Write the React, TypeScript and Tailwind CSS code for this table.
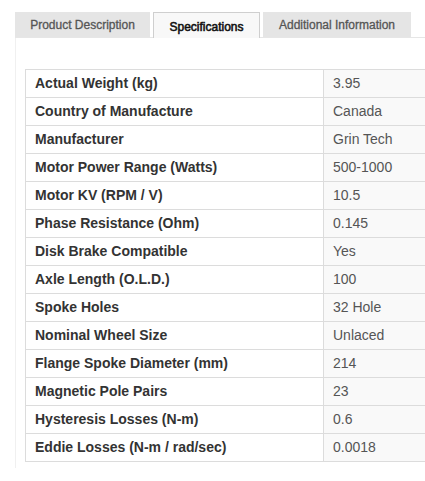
import React from "react";

const rows: [string, string][] = [
  ["Actual Weight (kg)", "3.95"],
  ["Country of Manufacture", "Canada"],
  ["Manufacturer", "Grin Tech"],
  ["Motor Power Range (Watts)", "500-1000"],
  ["Motor KV (RPM / V)", "10.5"],
  ["Phase Resistance (Ohm)", "0.145"],
  ["Disk Brake Compatible", "Yes"],
  ["Axle Length (O.L.D.)", "100"],
  ["Spoke Holes", "32 Hole"],
  ["Nominal Wheel Size", "Unlaced"],
  ["Flange Spoke Diameter (mm)", "214"],
  ["Magnetic Pole Pairs", "23"],
  ["Hysteresis Losses (N-m)", "0.6"],
  ["Eddie Losses (N-m / rad/sec)", "0.0018"],
];

export default function App() {
  return (
    <div className="w-[425px] h-[481px] bg-white overflow-hidden" style={{ fontFamily: '"Liberation Sans", Arial, sans-serif' }}>
      <div className="pt-[13px] pl-[15px]">
        <div className="flex items-end h-[25px] border-b border-[#e6e6e6] gap-[3px]">
          <div className="w-[135px] h-[25px] bg-[#e5e5e5] text-[#555] text-[12px] [-webkit-text-stroke:0.3px_#555] flex items-center justify-center">
            Product Description
          </div>
          <div className="w-[107px] h-[26px] -mb-px bg-[#f8f8f8] border border-b-0 border-[#cfcfcf] text-[#111] text-[12px] [-webkit-text-stroke:0.55px_#111] flex items-center justify-center pt-[2px]">
            Specifications
          </div>
          <div className="w-[148px] h-[25px] bg-[#e5e5e5] text-[#555] text-[12px] [-webkit-text-stroke:0.3px_#555] flex items-center justify-center">
            Additional Information
          </div>
        </div>
        <div className="border-l border-[#f0f0f0] pl-[9px] pt-[31px] h-[430px]">
          <table className="border-collapse w-[420px] text-[14px]">
            <tbody>
              {rows.map(([k, v]) => (
                <tr key={k} className="h-[28px]">
                  <td className="border border-[#dcdcdc] w-[298px] pl-[9px] font-bold text-[#333] leading-[27px] p-0">
                    {k}
                  </td>
                  <td className="border border-[#dcdcdc] bg-[#f9f9f9] pl-[9px] text-[#555] leading-[27px] p-0">
                    {v}
                  </td>
                </tr>
              ))}
            </tbody>
          </table>
        </div>
      </div>
    </div>
  );
}
